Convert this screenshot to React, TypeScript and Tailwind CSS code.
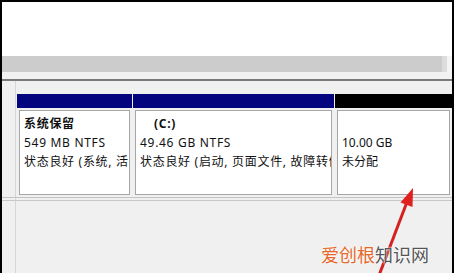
const partitions = [
  {
    width: "w-[115px]",
    head: "bg-[#04047e]",
    spaced: true,
    lines: [
      { text: "系统保留", bold: true, indent: false },
      { text: "549 MB NTFS", bold: false, indent: false },
      { text: "状态良好 (系统, 活动, 主分区)", bold: false, indent: false },
    ],
  },
  {
    width: "w-[201px]",
    head: "bg-[#04047e]",
    spaced: true,
    lines: [
      { text: "(C:)", bold: true, indent: true },
      { text: "49.46 GB NTFS", bold: false, indent: false },
      { text: "状态良好 (启动, 页面文件, 故障转储, 主分区)", bold: false, indent: false },
    ],
  },
  {
    width: "flex-1",
    head: "bg-black",
    spaced: false,
    lines: [
      { text: "", bold: false, indent: false },
      { text: "10.00 GB", bold: false, indent: false },
      { text: "未分配", bold: false, indent: false },
    ],
  },
];

export default function App() {
  return (
    <div className="relative w-[454px] h-[273px] overflow-hidden bg-[#f0f0f0] border-t-2 border-l-2 border-r-2 border-black flex flex-col font-['Noto_Sans','Noto_Sans_CJK_SC',sans-serif] text-[12px] text-[#111]">
      {/* top white area */}
      <div className="h-[54px] bg-white" />

      {/* grey toolbar strip */}
      <div className="h-[16px] flex bg-white">
        <div className="flex-1 bg-[#cccccc]" />
        <div className="w-[5px] bg-[#dcdcdc]" />
        <div className="w-[5px] bg-[#f4f4f4]" />
      </div>
      <div className="h-[7px] bg-[#f2f2f2]" />
      <div className="h-[2px] bg-[#7a7a7a]" />

      {/* disk row */}
      <div className="flex flex-col flex-1">
        <div className="flex h-[13px]">
          <div className="w-[14px] border-r border-[#d6d6d6]" />
        </div>
        <div className="flex h-[104px] border-b border-[#c4c4c4]">
          <div className="w-[14px] border-r border-[#d6d6d6]" />
          <div className="flex flex-1 pl-[1px] gap-[1px]">
            {partitions.map((p, i) => (
              <div key={i} className={`${p.width} flex flex-col`}>
                <div className={`h-[14px] ${p.head}`} />
                <div className="flex-1 p-[2px]">
                  <div className={`h-full border border-[#a6a6a6] bg-white overflow-hidden pl-[4px] pt-[3px] whitespace-nowrap ${p.spaced ? "tracking-[0.7px]" : ""}`}>
                    {p.lines.map((l, j) => (
                      <div
                        key={j}
                        className={`h-[19px] leading-[19px] overflow-hidden ${l.bold ? "font-bold" : ""} ${l.indent ? "pl-[14px]" : ""}`}
                      >
                        {l.text}
                      </div>
                    ))}
                  </div>
                </div>
              </div>
            ))}
          </div>
        </div>
        <div className="h-[2px] flex">
          <div className="w-[14px] border-r border-[#d6d6d6]" />
        </div>
        <div className="h-[1px] bg-[#c8c8c8]" />
        <div className="flex flex-1">
          <div className="w-[14px] border-r border-[#d6d6d6]" />
        </div>
      </div>

      {/* red arrow overlay */}
      <svg className="absolute left-0 top-0" width="454" height="273" viewBox="0 0 454 273">
        <line x1="376" y1="276" x2="405" y2="200" stroke="#d42222" strokeWidth="3" />
        <polygon points="411,186 398.5,200.5 410.5,205" fill="#e01f1f" />
      </svg>

      {/* watermark */}
      <div className="absolute left-[319px] top-[241px] text-[18px] leading-[22px] font-['Noto_Sans_CJK_SC',sans-serif] [text-shadow:0_0_2px_#fff,0_0_2px_#fff]">
        <span className="text-[#e5682a]">爱创根</span>
        <span className="text-[#555]">知识网</span>
      </div>
    </div>
  );
}
